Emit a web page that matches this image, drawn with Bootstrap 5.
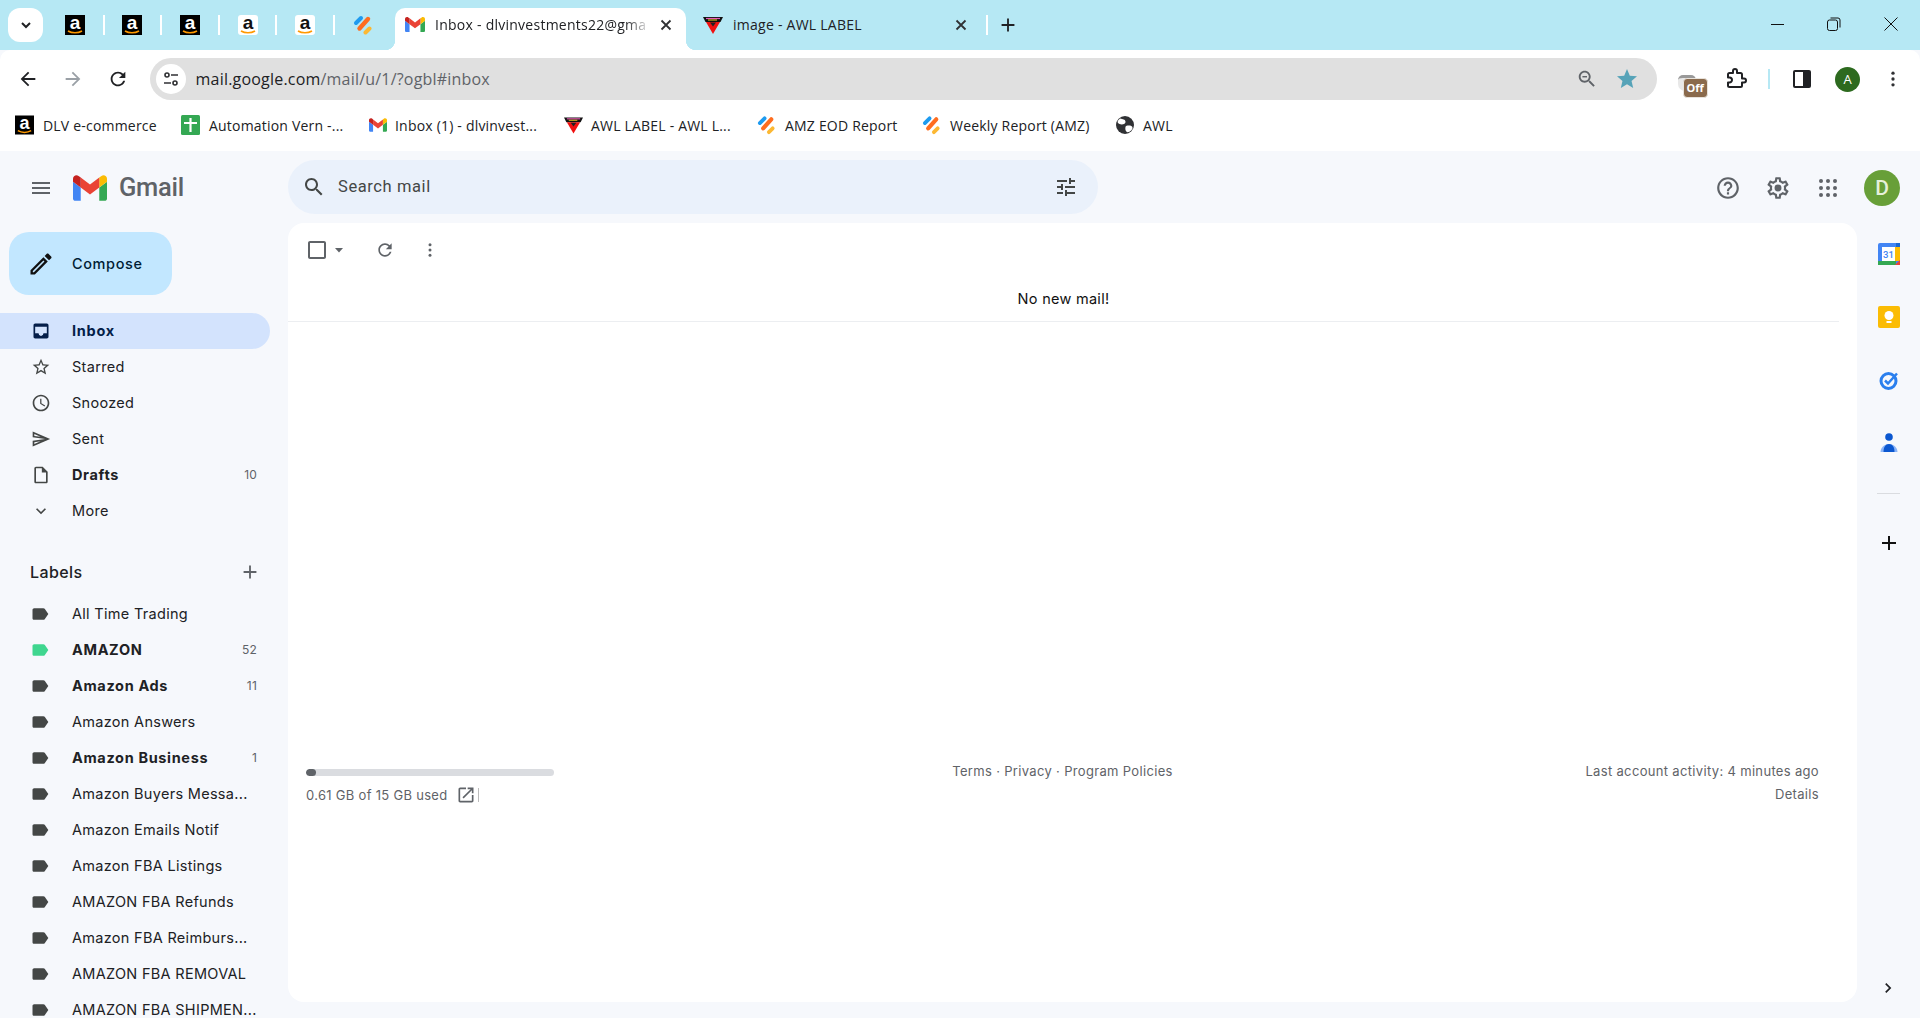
<!DOCTYPE html>
<html lang="en"><head><meta charset="utf-8"><title>Inbox - Gmail</title>
<link href="https://cdn.jsdelivr.net/npm/bootstrap@5.3.0/dist/css/bootstrap.min.css" rel="stylesheet">
<style>
html,body{height:1018px;overflow:hidden}
body{font-family:"Inter","Roboto",sans-serif;background:#f6f8fc;color:#202124}
.ui{font-family:"Open Sans","Liberation Sans",sans-serif}
svg{display:block;flex:none}
.strip{height:50px;background:#b6e8f4;padding-left:8px}
.chev-btn{width:35px;height:34px;margin-top:8px;margin-right:4px;background:#fff;border-radius:12px}
.ptab{width:55.6px;height:42px;margin-top:8px;padding-bottom:9px}
.tsep{width:2px;height:20px;margin-top:15px;background:#fff}
.atab{width:291px;height:42px;margin:8px 0 0 4.5px;background:#fff;border-radius:10px 10px 0 0;padding:0 12px 9px 10px;position:relative;z-index:1}
.atab::before,.atab::after{content:"";position:absolute;bottom:0;width:10px;height:10px}
.atab::before{left:-10px;background:radial-gradient(circle at 0 0,transparent 10px,#fff 10.5px)}
.atab::after{right:-10px;background:radial-gradient(circle at 100% 0,transparent 10px,#fff 10.5px)}
.ttitle{font-size:14px;letter-spacing:.25px;margin-left:10px;white-space:nowrap;color:#202124}
.atab .ttitle{width:216px;-webkit-mask-image:linear-gradient(90deg,#000 88%,transparent);mask-image:linear-gradient(90deg,#000 88%,transparent)}
.itab{width:300px;height:42px;margin-top:8px;padding:0 17px 9px 17px}
.itab .ttitle{width:218px}
.plus-tab{width:38px;height:42px;margin:8px 0 0 1px;padding-bottom:9px}
.winbtn{width:57.33px;height:48px}
.tb{height:51px;background:#fff;border-radius:10px 10px 0 0;padding-left:5px}
.navb{width:45.2px;height:42px;margin-top:8px}
.omni{width:1507px;height:42px;margin:8px 0 0 9px;background:#e0e0e0;border-radius:21px;padding:0 10px 0 6px}
.siteinfo{width:30px;height:30px;border-radius:50%;background:#fff}
.url{font-size:16px;letter-spacing:.2px;margin-left:10px;color:#5f6368;white-space:nowrap}
.url b{font-weight:400;color:#202124}
.omni-end{width:40px;height:42px}
.tools{margin-top:8px;height:42px}
.tool{width:42px;height:42px;position:relative}
.tool-last{margin-left:3px}
.tsepb{width:2px;height:20px;background:#b6e8f4;margin:0 11px}
.offbadge{position:absolute;left:10px;top:20px;width:23px;height:18px;background:#8a6a4c;border-radius:4px;color:#fff;font:700 11px/18px "Open Sans",sans-serif;text-align:center;border:1px solid #e8e3dc;box-sizing:content-box}
.offcup{position:absolute;left:5px;top:17px;width:18px;height:16px;border-radius:5px 5px 7px 7px;background:#e8e8e8;border-top:3px solid #999}
.avatar-a{width:25px;height:25px;border-radius:50%;background:#2d6a1f;color:#fff;font:13px/25px "Open Sans",sans-serif;text-align:center}
.bmbar{height:50px;background:#fff;padding:0 0 2px 15px;display:grid;grid-template-columns:166px 188px 195px 193px 165px 194px auto;justify-content:start;align-items:center}
.bm{font-size:14px;letter-spacing:.2px;color:#202124;white-space:nowrap}
.bm svg{margin-right:9px}
.ghead{height:72px}
.brand{width:288px;padding:2px 0 0 29px}
.menu-ic{margin-right:20px}
.gword{font:500 25.5px/1 "Roboto",sans-serif;color:#5f6368;margin-left:12px;letter-spacing:-.3px}
.search{width:810px;height:54px;margin-top:9px;background:#eaf1fb;border-radius:27px;padding:0 20px 0 14px}
.searchtxt{font-size:16.5px;color:#444746;margin-left:12px;font-family:"Roboto",sans-serif;letter-spacing:.6px}
.hicons{margin-left:auto;padding-top:1px}
.hbtn{width:50px;height:40px}
.gavatar{width:36px;height:36px;border-radius:50%;background:#689f38;color:#e6f0da;font:500 21px/36px "Roboto",sans-serif;text-align:center;margin:0 20px 0 11px}
.gbody{height:795px}
.side{width:288px;padding-top:9px;overflow:hidden}
.compose{width:163px;height:63px;margin-left:9px;background:#c2e7ff;border:0;border-radius:20px;padding:0 0 0 18px;color:#001d35;font-size:14.5px;letter-spacing:.6px;font-weight:500;display:flex;align-items:center;gap:17px}
.navlist{margin-top:18px;width:270px}
.navrow{height:36px;padding:0 13px 0 31px;font-size:14.5px;letter-spacing:.3px;color:#202124;display:flex;align-items:center;white-space:nowrap}
.navrow svg{margin-right:21px;width:20px;height:20px}
.navrow.on{background:#d3e3fd;border-radius:0 18px 18px 0;color:#041e49;font-weight:700;letter-spacing:.75px}
.navrow.un{font-weight:700;letter-spacing:.65px}
.lablist .navrow{padding-left:30px}
.lablist .navrow svg{fill:#444746;margin-right:22px}
.cnt{margin-left:auto;font-size:12px;font-weight:400;color:#5f6368;letter-spacing:.2px}
.labhead{height:36px;margin-top:25px;width:270px;padding:0 9px 0 30px;font-size:16px;letter-spacing:.4px;font-weight:500;color:#202124}
.lablist{margin-top:6px;width:270px}
.lablist .navrow svg.labmint{fill:#3fd68f}
.card-main{width:1569px;height:779px;background:#fff;border-radius:16px}
.gtool{height:54px;padding-left:17px}
.gtool svg{fill:#5f6368}
.gt-arrow{margin-left:5px}
.gt-ref{margin-left:31px}
.gt-dots{margin-left:26px}
.nomail{height:45px;margin-right:18px;border-bottom:1px solid #eceef1;font-size:14.5px;letter-spacing:.28px;color:#111;padding-bottom:1px}
.gfoot{margin-top:438px;padding:0 38px 0 18px;display:grid;grid-template-columns:1fr auto 1fr;font-size:13px;letter-spacing:.33px;line-height:23px;color:#5f6368}
.stor{padding-top:9px}
.progress.storebar{width:248px;height:7px;background:#dadce0;border-radius:4px}
.storebar .progress-bar{background:#5f6368;border-radius:4px}
.stortxt{margin-top:8px;line-height:22px;letter-spacing:.3px}
.vline{width:1px;height:14px;background:#bbb;margin-left:2px}
.rail{width:63px;position:relative}
.railic{height:63px;padding-top:20px}
.raildiv{width:23px;height:1px;background:#dadce0;margin:18px auto 0 auto}
.railend{position:absolute;left:21px;bottom:20px}
.railplus{margin-top:37px}
</style></head>
<body class="d-flex flex-column">
<svg class="d-none" xmlns="http://www.w3.org/2000/svg">
<symbol id="amz" viewBox="0 0 20 20"><rect width="20" height="20" fill="#000"/><text x="10" y="14" text-anchor="middle" font-family="Liberation Sans" font-weight="700" font-size="19" fill="#fff">a</text><path d="M3 16c4 2.400 10 2.400 14 0" fill="none" stroke="#f90" stroke-width="1.600"/></symbol>
<symbol id="amzw" viewBox="0 0 20 20"><rect width="20" height="20" rx="3" fill="#fff"/><text x="10" y="14" text-anchor="middle" font-family="Liberation Sans" font-weight="700" font-size="19" fill="#111">a</text><path d="M3 16c4 2.400 10 2.400 14 0" fill="none" stroke="#f90" stroke-width="1.600"/></symbol>
<symbol id="pills" viewBox="0 0 20 20"><g fill="none" stroke-linecap="round"><path d="M3 8l5-5" stroke="#1e9bf0" stroke-width="4"/><path d="M6.500 13.500L15 4" stroke="#ff6d1f" stroke-width="4.400"/><path d="M12.500 17.500l4-4" stroke="#fcb833" stroke-width="4"/></g></symbol>
<symbol id="gm" viewBox="52 42 88 66"><path fill="#4285f4" d="M58 108h14V74L52 59v43c0 3.32 2.69 6 6 6"/><path fill="#34a853" d="M120 108h14c3.32 0 6-2.69 6-6V59l-20 15"/><path fill="#fbbc04" d="M120 48v26l20-15v-8c0-7.42-8.47-11.65-14.4-7.2"/><path fill="#ea4335" d="M72 74V48l24 18 24-18v26L96 92"/><path fill="#c5221f" d="M52 51v8l20 15V48l-5.6-4.2c-5.94-4.45-14.4-.22-14.4 7.2"/></symbol>
<symbol id="awl" viewBox="0 0 20 20"><path d="M0 2h20l-2.500 5H2.500z" fill="#111"/><path d="M3 3.500h14" stroke="#e85bb5" stroke-width="1.200"/><path d="M5 5h9" stroke="#f5d020" stroke-width="1"/><path d="M3 7h14l-7 12z" fill="#f01010"/><path d="M7 7.500h6l-3 4z" fill="#222"/></symbol>
<symbol id="x" viewBox="0 0 16 16"><path d="M3.500 3.500l9 9m0-9l-9 9" stroke="#303134" stroke-width="1.800" fill="none"/></symbol>
<symbol id="menu" viewBox="0 0 24 24"><path d="M3 18h18v-2H3v2zm0-5h18v-2H3v2zm0-7v2h18V6H3z"/></symbol>
<symbol id="search" viewBox="0 0 24 24"><path d="M15.5 14h-.79l-.28-.27C15.41 12.59 16 11.11 16 9.5 16 5.91 13.09 3 9.5 3S3 5.910 3 9.500 5.910 16 9.500 16c1.610 0 3.090-.59 4.230-1.570l.27.28v.79l5 4.990L20.490 19l-4.990-5zm-6 0C7.010 14 5 11.990 5 9.500S7.010 5 9.500 5 14 7.010 14 9.500 11.990 14 9.500 14z"/></symbol>
<symbol id="tune" viewBox="0 0 24 24"><path d="M3 17v2h6v-2H3zM3 5v2h10V5H3zm10 16v-2h8v-2h-8v-2h-2v6h2zM7 9v2H3v2h4v2h2V9H7zm14 4v-2H11v2h10zm-6-4h2V7h4V5h-4V3h-2v6z"/></symbol>
<symbol id="help" viewBox="0 0 24 24"><path d="M11 18h2v-2h-2v2zm1-16C6.480 2 2 6.480 2 12s4.480 10 10 10 10-4.480 10-10S17.520 2 12 2zm0 18c-4.410 0-8-3.590-8-8s3.590-8 8-8 8 3.590 8 8-3.590 8-8 8zm0-14c-2.210 0-4 1.790-4 4h2c0-1.100.9-2 2-2s2 .9 2 2c0 2-3 1.750-3 5h2c0-2.250 3-2.500 3-5 0-2.210-1.790-4-4-4z"/></symbol>
<symbol id="gear" viewBox="0 0 24 24"><path d="M19.430 12.980c.04-.32.07-.64.07-.98 0-.34-.03-.66-.07-.98l2.110-1.650c.19-.15.24-.42.12-.64l-2-3.460c-.09-.16-.26-.25-.44-.25-.06 0-.12.01-.17.03l-2.490 1c-.52-.4-1.080-.73-1.690-.98l-.38-2.650C14.460 2.180 14.250 2 14 2h-4c-.25 0-.46.18-.49.42l-.38 2.650c-.61.25-1.170.59-1.690.98l-2.490-1c-.06-.02-.12-.03-.18-.03-.17 0-.34.09-.43.25l-2 3.460c-.13.22-.07.49.12.64l2.110 1.650c-.04.32-.07.65-.07.98 0 .33.03.66.07.98l-2.110 1.650c-.19.15-.24.42-.12.64l2 3.460c.09.16.26.25.44.25.06 0 .12-.01.17-.03l2.490-1c.52.4 1.080.73 1.690.98l.38 2.650c.03.24.24.42.49.42h4c.25 0 .46-.18.49-.42l.38-2.650c.61-.25 1.170-.59 1.690-.98l2.490 1c.06.02.12.03.18.03.17 0 .34-.09.43-.25l2-3.460c.12-.22.07-.49-.12-.64l-2.110-1.650zm-1.980-1.710c.04.31.05.52.05.73 0 .21-.02.43-.05.73l-.14 1.130.89.7 1.080.84-.7 1.210-1.270-.51-1.040-.42-.9.68c-.43.32-.84.56-1.250.73l-1.060.43-.16 1.130-.2 1.350h-1.400l-.19-1.350-.16-1.130-1.060-.43c-.43-.18-.83-.41-1.230-.71l-.91-.7-1.060.43-1.270.51-.7-1.210 1.080-.84.89-.7-.14-1.130c-.03-.31-.05-.54-.05-.74s.02-.43.05-.73l.14-1.130-.89-.7-1.080-.84.7-1.210 1.270.51 1.040.42.9-.68c.43-.32.84-.56 1.250-.73l1.060-.43.16-1.130.2-1.350h1.390l.19 1.350.16 1.130 1.060.43c.43.18.83.41 1.230.71l.91.7 1.060-.43 1.270-.51.7 1.210-1.070.85-.89.7.14 1.130z"/><circle cx="12" cy="12" r="3.200"/></symbol>
<symbol id="apps" viewBox="0 0 24 24"><g><circle cx="5" cy="5" r="2"/><circle cx="12" cy="5" r="2"/><circle cx="19" cy="5" r="2"/><circle cx="5" cy="12" r="2"/><circle cx="12" cy="12" r="2"/><circle cx="19" cy="12" r="2"/><circle cx="5" cy="19" r="2"/><circle cx="12" cy="19" r="2"/><circle cx="19" cy="19" r="2"/></g></symbol>
<symbol id="lab" viewBox="0 0 24 24"><path d="M17.630 5.840C17.270 5.330 16.670 5 16 5L5 5.010C3.900 5.010 3 5.900 3 7v10c0 1.100.9 1.990 2 1.990L16 19c.67 0 1.270-.33 1.630-.84L22 12l-4.370-6.160z"/></symbol>
<symbol id="plus" viewBox="0 0 24 24"><path d="M19 13h-6v6h-2v-6H5v-2h6V5h2v6h6v2z"/></symbol>
<symbol id="refresh" viewBox="0 0 24 24"><path d="M17.650 6.350C16.200 4.900 14.210 4 12 4c-4.420 0-7.990 3.580-7.990 8s3.570 8 7.990 8c3.730 0 6.840-2.550 7.730-6h-2.080c-.82 2.330-3.040 4-5.650 4-3.310 0-6-2.690-6-6s2.690-6 6-6c1.660 0 3.140.69 4.220 1.780L13 11h7V4l-2.350 2.350z"/></symbol>
<symbol id="vdots" viewBox="0 0 24 24"><circle cx="12" cy="5" r="2"/><circle cx="12" cy="12" r="2"/><circle cx="12" cy="19" r="2"/></symbol>
</svg>

<header class="strip d-flex ui">
  <div class="chev-btn d-flex align-items-center justify-content-center"><svg width="14" height="14" viewBox="0 0 14 14"><path d="M3 5l4 4 4-4" fill="none" stroke="#202124" stroke-width="2"/></svg></div>
  <div class="ptab d-flex align-items-center justify-content-center"><svg width="20" height="20"><use href="#amz"/></svg></div><i class="tsep"></i>
  <div class="ptab d-flex align-items-center justify-content-center"><svg width="20" height="20"><use href="#amz"/></svg></div><i class="tsep"></i>
  <div class="ptab d-flex align-items-center justify-content-center"><svg width="20" height="20"><use href="#amz"/></svg></div><i class="tsep"></i>
  <div class="ptab d-flex align-items-center justify-content-center"><svg width="20" height="20"><use href="#amzw"/></svg></div><i class="tsep"></i>
  <div class="ptab d-flex align-items-center justify-content-center"><svg width="20" height="20"><use href="#amzw"/></svg></div><i class="tsep"></i>
  <div class="ptab d-flex align-items-center justify-content-center"><svg width="20" height="20"><use href="#pills"/></svg></div>
  <div class="atab d-flex align-items-center"><svg width="20" height="15"><use href="#gm"/></svg><span class="ttitle">Inbox - dlvinvestments22@gma</span><svg class="ms-auto" width="16" height="16"><use href="#x"/></svg></div>
  <div class="itab d-flex align-items-center"><svg width="20" height="20"><use href="#awl"/></svg><span class="ttitle">image - AWL LABEL</span><svg class="ms-auto" width="16" height="16"><use href="#x"/></svg></div>
  <i class="tsep"></i>
  <div class="plus-tab d-flex align-items-center justify-content-center"><svg width="22" height="22" fill="#202124"><use href="#plus"/></svg></div>
  <div class="ms-auto d-flex">
    <div class="winbtn d-flex align-items-center justify-content-center"><svg width="14" height="14"><path d="M1 7.500h13" stroke="#111" stroke-width="1"/></svg></div>
    <div class="winbtn d-flex align-items-center justify-content-center"><svg width="14" height="14" fill="none" stroke="#111"><rect x=".5" y="3" width="10" height="10.500" rx="2"/><path d="M3.500 1h7.500a2 2 0 0 1 2 2v7.500"/></svg></div>
    <div class="winbtn d-flex align-items-center justify-content-center"><svg width="14" height="14"><path d="M.5.500l13 13m0-13l-13 13" stroke="#111" stroke-width="1"/></svg></div>
  </div>
</header>

<div class="tb d-flex ui">
  <div class="navb d-flex align-items-center justify-content-center"><svg width="22" height="22" viewBox="0 0 24 24" fill="#202124"><path d="M20 11H7.830l5.590-5.590L12 4l-8 8 8 8 1.410-1.410L7.830 13H20v-2z"/></svg></div>
  <div class="navb d-flex align-items-center justify-content-center"><svg width="22" height="22" viewBox="0 0 24 24" fill="#9aa0a6"><path d="M12 4l-1.410 1.410L16.170 11H4v2h12.170l-5.580 5.590L12 20l8-8z"/></svg></div>
  <div class="navb d-flex align-items-center justify-content-center"><svg width="22" height="22" fill="#202124"><use href="#refresh"/></svg></div>
  <div class="omni d-flex align-items-center">
    <div class="siteinfo d-flex align-items-center justify-content-center"><svg width="18" height="18" viewBox="0 0 18 18" fill="none" stroke="#303134" stroke-width="1.600"><circle cx="5" cy="5" r="2"/><path d="M9 5h7M2 13h7"/><circle cx="13" cy="13" r="2"/></svg></div>
    <span class="url"><b>mail.google.com</b>/mail/u/1/?ogbl#inbox</span>
    <div class="ms-auto omni-end d-flex align-items-center justify-content-center"><svg width="22" height="22" viewBox="0 0 24 24" fill="#5f6368"><use href="#search"/><path d="M7 8.700h5v1.600H7z"/></svg></div>
    <div class="omni-end d-flex align-items-center justify-content-center"><svg width="24" height="24" viewBox="0 0 24 24" fill="#56a3b8"><path d="M12 17.270L18.180 21l-1.640-7.030L22 9.240l-7.190-.61L12 2 9.190 8.630 2 9.240l5.460 4.730L5.820 21z"/></svg></div>
  </div>
  <div class="tools d-flex align-items-center ms-3">
    <div class="tool"><i class="offcup"></i><span class="offbadge">Off</span></div>
    <div class="tool d-flex align-items-center justify-content-center"><svg width="24" height="24" viewBox="0 0 24 24" fill="none" stroke="#202124" stroke-width="2" stroke-linejoin="round"><path d="M20 11.500h-2V7.500a1.500 1.500 0 0 0-1.500-1.500H13V4a2 2 0 0 0-4 0v2H5.500A1.500 1.500 0 0 0 4 7.500v3h1.500a2.500 2.500 0 0 1 0 5H4v3A1.500 1.500 0 0 0 5.500 20h11a1.500 1.500 0 0 0 1.500-1.500v-3h2a2 2 0 0 0 0-4z"/></svg></div>
    <i class="tsepb"></i>
    <div class="tool d-flex align-items-center justify-content-center"><svg width="18" height="18" viewBox="0 0 18 18"><rect width="18" height="18" rx="2" fill="#202124"/><rect x="2" y="2" width="8" height="14" fill="#fff"/></svg></div>
    <div class="tool ms-1 d-flex align-items-center justify-content-center"><div class="avatar-a">A</div></div>
    <div class="tool tool-last d-flex align-items-center justify-content-center"><svg width="20" height="20" fill="#303134"><use href="#vdots"/></svg></div>
  </div>
</div>

<nav class="bmbar ui">
  <span class="bm d-flex align-items-center"><svg width="19" height="20"><use href="#amz"/></svg>DLV e-commerce</span>
  <span class="bm d-flex align-items-center"><svg width="19" height="20" viewBox="0 0 19 20"><rect width="19" height="20" rx="1.500" fill="#34a853"/><path d="M3 8h13M9.500 3v14" stroke="#fff" stroke-width="2.200"/></svg>Automation Vern -...</span>
  <span class="bm d-flex align-items-center"><svg class="me-2" width="18" height="14"><use href="#gm"/></svg>Inbox (1) - dlvinvest...</span>
  <span class="bm d-flex align-items-center"><svg class="me-2" width="19" height="20"><use href="#awl"/></svg>AWL LABEL - AWL L...</span>
  <span class="bm d-flex align-items-center"><svg width="19" height="20"><use href="#pills"/></svg>AMZ EOD Report</span>
  <span class="bm d-flex align-items-center"><svg width="19" height="20"><use href="#pills"/></svg>Weekly Report (AMZ)</span>
  <span class="bm d-flex align-items-center"><svg width="18" height="18" viewBox="0 0 18 18"><circle cx="9" cy="9" r="9" fill="#303134"/><path d="M4 2.500c3 1 5 .5 5.500 3S6 9 3.500 8 1 5 4 2.500zM10 10c3-1 6-.5 6.500 1.500S13 17 11 16s-2-5-1-6z" fill="#fff"/></svg>AWL</span>
</nav>

<div class="ghead d-flex">
  <div class="brand d-flex align-items-center">
    <svg width="24" height="24" fill="#5f6368" class="menu-ic"><use href="#menu"/></svg>
    <svg width="34" height="26"><use href="#gm"/></svg><span class="gword">Gmail</span>
  </div>
  <div class="search d-flex align-items-center">
    <svg width="24" height="24" fill="#444746"><use href="#search"/></svg><span class="searchtxt">Search mail</span>
    <svg class="ms-auto" width="24" height="24" fill="#444746"><use href="#tune"/></svg>
  </div>
  <div class="hicons d-flex align-items-center">
    <div class="hbtn d-flex align-items-center justify-content-center"><svg width="26" height="26" fill="#5f6368"><use href="#help"/></svg></div>
    <div class="hbtn d-flex align-items-center justify-content-center"><svg width="26" height="26" fill="#5f6368"><use href="#gear"/></svg></div>
    <div class="hbtn d-flex align-items-center justify-content-center"><svg width="24" height="24" fill="#5f6368"><use href="#apps"/></svg></div>
    <div class="gavatar">D</div>
  </div>
</div>

<div class="gbody d-flex">
  <aside class="side">
    <button class="compose"><svg width="28" height="28" viewBox="0 0 24 24" fill="#111"><path d="M14.060 9.020l.92.92L5.920 19H5v-.92l9.060-9.060M17.660 3c-.25 0-.51.1-.7.29l-1.830 1.830 3.750 3.750 1.830-1.830c.39-.39.39-1.020 0-1.410l-2.340-2.340c-.2-.2-.45-.29-.71-.29zm-3.600 3.190L3 17.250V21h3.750L17.810 9.940l-3.750-3.750z"/></svg>Compose</button>
    <div class="navlist">
      <div class="navrow on"><svg viewBox="0 0 24 24" fill="#041e49"><path d="M19 3H5c-1.100 0-2 .9-2 2v14c0 1.100.9 2 2 2h14c1.100 0 2-.9 2-2V5c0-1.100-.9-2-2-2zm0 12h-4c0 1.660-1.340 3-3 3s-3-1.340-3-3H5V7h14v8z"/><path d="M5 15h4c0 1.660 1.340 3 3 3s3-1.340 3-3h4v4H5z"/></svg>Inbox</div>
      <div class="navrow"><svg viewBox="0 0 24 24" fill="#444746"><path d="M22 9.240l-7.190-.62L12 2 9.190 8.630 2 9.240l5.460 4.730L5.820 21 12 17.270 18.180 21l-1.630-7.030L22 9.240zM12 15.400l-3.760 2.270 1-4.280-3.320-2.880 4.380-.38L12 6.100l1.710 4.040 4.380.38-3.320 2.880 1 4.280L12 15.400z"/></svg>Starred</div>
      <div class="navrow"><svg viewBox="0 0 24 24" fill="#444746"><path d="M11.990 2C6.470 2 2 6.480 2 12s4.470 10 9.990 10C17.520 22 22 17.520 22 12S17.520 2 11.990 2zM12 20c-4.420 0-8-3.580-8-8s3.580-8 8-8 8 3.580 8 8-3.580 8-8 8zm.5-13H11v6l5.250 3.150.75-1.230-4.500-2.670z"/></svg>Snoozed</div>
      <div class="navrow"><svg viewBox="0 0 24 24" fill="#444746"><path d="M4.010 6.030l7.510 3.220-7.520-1 .01-2.220m7.500 8.720L4 17.970v-2.220l7.510-1M2.010 3L2 10l15 2-15 2 .01 7L23 12 2.010 3z"/></svg>Sent</div>
      <div class="navrow un"><svg viewBox="0 0 24 24" fill="#444746"><path d="M14 2H6c-1.100 0-1.990.9-1.990 2L4 20c0 1.100.89 2 1.990 2H18c1.100 0 2-.9 2-2V8l-6-6zM6 20V4h7v5h5v11H6z"/></svg>Drafts<span class="cnt">10</span></div>
      <div class="navrow"><svg viewBox="0 0 24 24" fill="#444746"><path d="M16.590 8.590L12 13.170 7.410 8.590 6 10l6 6 6-6z"/></svg>More</div>
    </div>
    <div class="labhead d-flex align-items-center justify-content-between">Labels<svg width="22" height="22" fill="#5f6368"><use href="#plus"/></svg></div>
    <div class="lablist">
      <div class="navrow"><svg><use href="#lab"/></svg>All Time Trading</div>
      <div class="navrow un"><svg class="labmint"><use href="#lab"/></svg>AMAZON<span class="cnt">52</span></div>
      <div class="navrow un"><svg><use href="#lab"/></svg>Amazon Ads<span class="cnt">11</span></div>
      <div class="navrow"><svg><use href="#lab"/></svg>Amazon Answers</div>
      <div class="navrow un"><svg><use href="#lab"/></svg>Amazon Business<span class="cnt">1</span></div>
      <div class="navrow"><svg><use href="#lab"/></svg>Amazon Buyers Messa...</div>
      <div class="navrow"><svg><use href="#lab"/></svg>Amazon Emails Notif</div>
      <div class="navrow"><svg><use href="#lab"/></svg>Amazon FBA Listings</div>
      <div class="navrow"><svg><use href="#lab"/></svg>AMAZON FBA Refunds</div>
      <div class="navrow"><svg><use href="#lab"/></svg>Amazon FBA Reimburs...</div>
      <div class="navrow"><svg><use href="#lab"/></svg>AMAZON FBA REMOVAL</div>
      <div class="navrow"><svg><use href="#lab"/></svg>AMAZON FBA SHIPMEN...</div>
    </div>
  </aside>
  <main class="card-main">
    <div class="gtool d-flex align-items-center">
      <svg width="24" height="24" viewBox="0 0 24 24"><path d="M19 5v14H5V5h14m0-2H5c-1.100 0-2 .9-2 2v14c0 1.100.9 2 2 2h14c1.100 0 2-.9 2-2V5c0-1.100-.9-2-2-2z"/></svg>
      <svg class="gt-arrow" width="10" height="10" viewBox="0 0 10 10"><path d="M1 3h8L5 7.500z"/></svg>
      <svg class="gt-ref" width="20" height="20"><use href="#refresh"/></svg>
      <svg class="gt-dots" width="18" height="18"><use href="#vdots"/></svg>
    </div>
    <div class="nomail d-flex align-items-center justify-content-center">No new mail!</div>
    <div class="gfoot">
      <div class="stor">
        <div class="progress storebar"><div class="progress-bar" style="width:4%"></div></div>
        <div class="stortxt d-flex align-items-center">0.61 GB of 15 GB used<svg class="ms-2" width="20" height="20" viewBox="0 0 24 24" fill="#5f6368"><path d="M19 19H5V5h7V3H5c-1.110 0-2 .9-2 2v14c0 1.100.89 2 2 2h14c1.100 0 2-.9 2-2v-7h-2v7zM14 3v2h3.590l-9.830 9.830 1.410 1.410L19 6.410V10h2V3h-7z"/></svg><i class="vline"></i></div>
      </div>
      <div>Terms · Privacy · Program Policies</div>
      <div class="text-end">Last account activity: 4 minutes ago<br>Details</div>
    </div>
  </main>
  <aside class="rail">
    <div class="railic d-flex justify-content-center"><svg width="22" height="22" viewBox="0 0 22 22"><rect width="22" height="22" rx="2" fill="#4285f4"/><rect x="16" y="4" width="6" height="14" fill="#fbbc04"/><rect y="18" width="18" height="4" fill="#34a853"/><rect width="4" height="4" x="18" fill="#1967d2"/><path d="M17 22l5-5v5z" fill="#ea4335"/><rect x="4" y="4" width="13" height="14" fill="#fff"/><text x="10.500" y="15" text-anchor="middle" font-family="Roboto" font-size="9.500" font-weight="500" fill="#4285f4">31</text></svg></div>
    <div class="railic d-flex justify-content-center"><svg width="22" height="22" viewBox="0 0 22 22"><rect width="22" height="22" rx="2" fill="#fbbc04"/><circle cx="11" cy="9.500" r="4.500" fill="#fff"/><rect x="8.500" y="15" width="5" height="2" fill="#fff"/></svg></div>
    <div class="railic d-flex justify-content-center"><svg width="22" height="22" viewBox="0 0 22 22" fill="none"><circle cx="10.500" cy="12" r="7.500" stroke="#2a7fee" stroke-width="3"/><path d="M7 11.500l3 3 9-10" stroke="#2a7fee" stroke-width="2.500"/></svg></div>
    <div class="railic d-flex justify-content-center"><svg width="22" height="22" viewBox="0 0 22 22"><circle cx="11" cy="5" r="3.800" fill="#0b57d0"/><path d="M2.500 20c0-4 3.500-8 8.500-8s8.500 4 8.500 8z" fill="#8ab4f8"/><path d="M5.500 20c0-5 2-8 5.500-8s5.500 3 5.500 8z" fill="#0b57d0"/></svg></div>
    <div class="raildiv"></div>
    <div class="railplus d-flex justify-content-center"><svg width="24" height="24" fill="#111"><use href="#plus"/></svg></div>
    <div class="railend"><svg width="20" height="20" viewBox="0 0 24 24" fill="#202124"><path d="M10 6L8.590 7.410 13.170 12l-4.580 4.590L10 18l6-6z"/></svg></div>
  </aside>
</div>
<script src="https://cdn.jsdelivr.net/npm/bootstrap@5.3.0/dist/js/bootstrap.bundle.min.js"></script>
</body></html>
